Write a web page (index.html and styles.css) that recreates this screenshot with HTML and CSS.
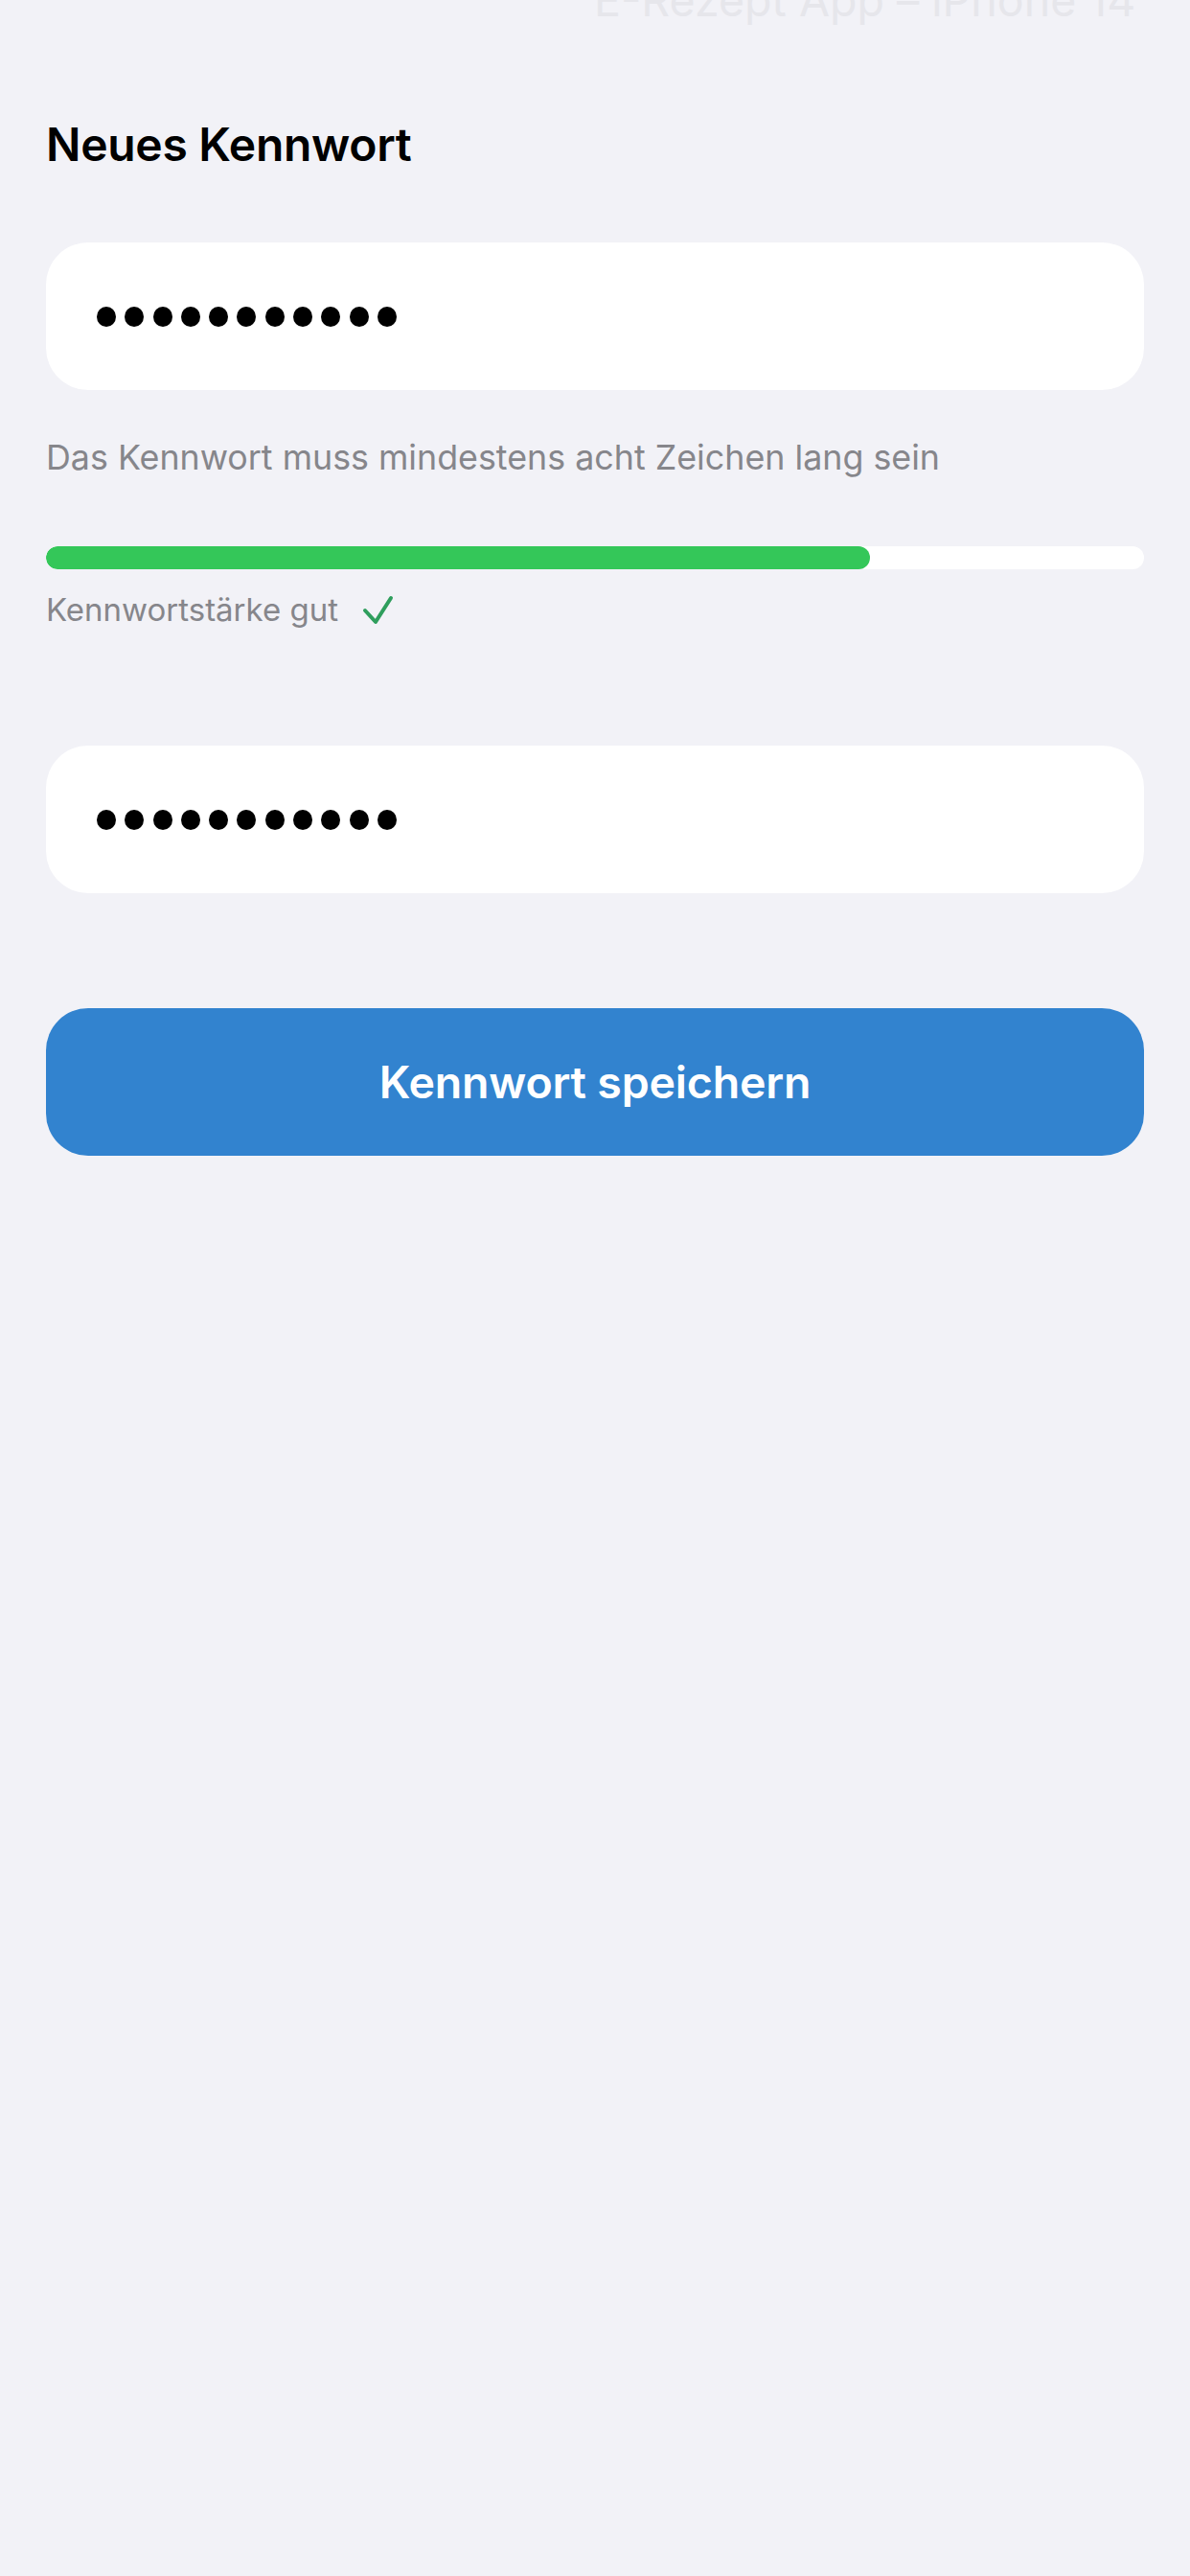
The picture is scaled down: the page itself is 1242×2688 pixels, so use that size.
FILE: index.html
```html
<!DOCTYPE html>
<html lang="de">
<head>
<meta charset="utf-8">
<title>Neues Kennwort</title>
<link rel="stylesheet" href="styles.css">
</head>
<body>
<div class="watermark">E-Rezept App – iPhone 14</div>
<main class="screen">
  <h1 class="title">Neues Kennwort</h1>
  <div class="field" aria-label="Neues Kennwort">
    <span class="dot"></span><span class="dot"></span><span class="dot"></span><span class="dot"></span><span class="dot"></span><span class="dot"></span><span class="dot"></span><span class="dot"></span><span class="dot"></span><span class="dot"></span><span class="dot"></span>
  </div>
  <p class="hint">Das Kennwort muss mindestens acht Zeichen lang sein</p>
  <div class="meter"><div class="meter-fill" style="width: 75%"></div></div>
  <div class="strength">
    <span class="strength-label">Kennwortstärke gut</span>
    <svg class="check" width="34" height="34" viewBox="0 0 34 34" aria-hidden="true">
      <path d="M4 18 L15 30 L31 5" fill="none" stroke="#2f9e5d" stroke-width="4" stroke-linecap="round" stroke-linejoin="round"/>
    </svg>
  </div>
  <div class="field field-repeat" aria-label="Kennwort wiederholen">
    <span class="dot"></span><span class="dot"></span><span class="dot"></span><span class="dot"></span><span class="dot"></span><span class="dot"></span><span class="dot"></span><span class="dot"></span><span class="dot"></span><span class="dot"></span><span class="dot"></span>
  </div>
  <button class="save" type="button">Kennwort speichern</button>
</main>
</body>
</html>
```

FILE: styles.css
```css
html, body {
  margin: 0;
  padding: 0;
  background: #f2f2f7;
}
body {
  width: 1242px;
  min-height: 2688px;
  position: relative;
  overflow: hidden;
  font-family: Inter, "Noto Sans", "Liberation Sans", sans-serif;
  color: #000;
}
.watermark {
  position: absolute;
  left: 620px;
  top: -24px;
  font-size: 46.5px;
  line-height: 48px;
  font-weight: 400;
  color: #e6e6eb;
  white-space: nowrap;
}
.screen {
  display: flex;
  flex-direction: column;
  padding: 124px 48px 0 48px;
}
.title {
  margin: 0;
  font-size: 48px;
  line-height: 54px;
  font-weight: 600;
  letter-spacing: -0.3px;
}
.field {
  margin-top: 75px;
  height: 154px;
  background: #fff;
  border-radius: 44px;
  display: flex;
  align-items: center;
  gap: 9.3px;
  padding-left: 53px;
  box-sizing: border-box;
}
.dot {
  width: 20px;
  height: 21px;
  border-radius: 50%;
  background: #000;
  flex: none;
}
.hint {
  margin: 50px 0 0 0;
  font-size: 35.8px;
  line-height: 40px;
  color: #86868b;
}
.meter {
  margin-top: 73px;
  height: 24px;
  border-radius: 12px;
  background: #fff;
  overflow: hidden;
}
.meter-fill {
  height: 100%;
  background: #34c759;
  border-radius: 12px;
}
.strength {
  margin-top: 22px;
  display: flex;
  align-items: center;
  gap: 24px;
  height: 40px;
}
.strength-label {
  font-size: 33px;
  line-height: 40px;
  color: #86868b;
}
.check {
  flex: none;
}
.field-repeat {
  margin-top: 122px;
}
.save {
  margin-top: 120px;
  height: 154px;
  border: none;
  border-radius: 44px;
  background: #3283cf;
  color: #fff;
  font-family: Inter, "Noto Sans", "Liberation Sans", sans-serif;
  font-size: 46.5px;
  font-weight: 600;
  letter-spacing: -0.2px;
  padding: 0;
  cursor: pointer;
}
```
